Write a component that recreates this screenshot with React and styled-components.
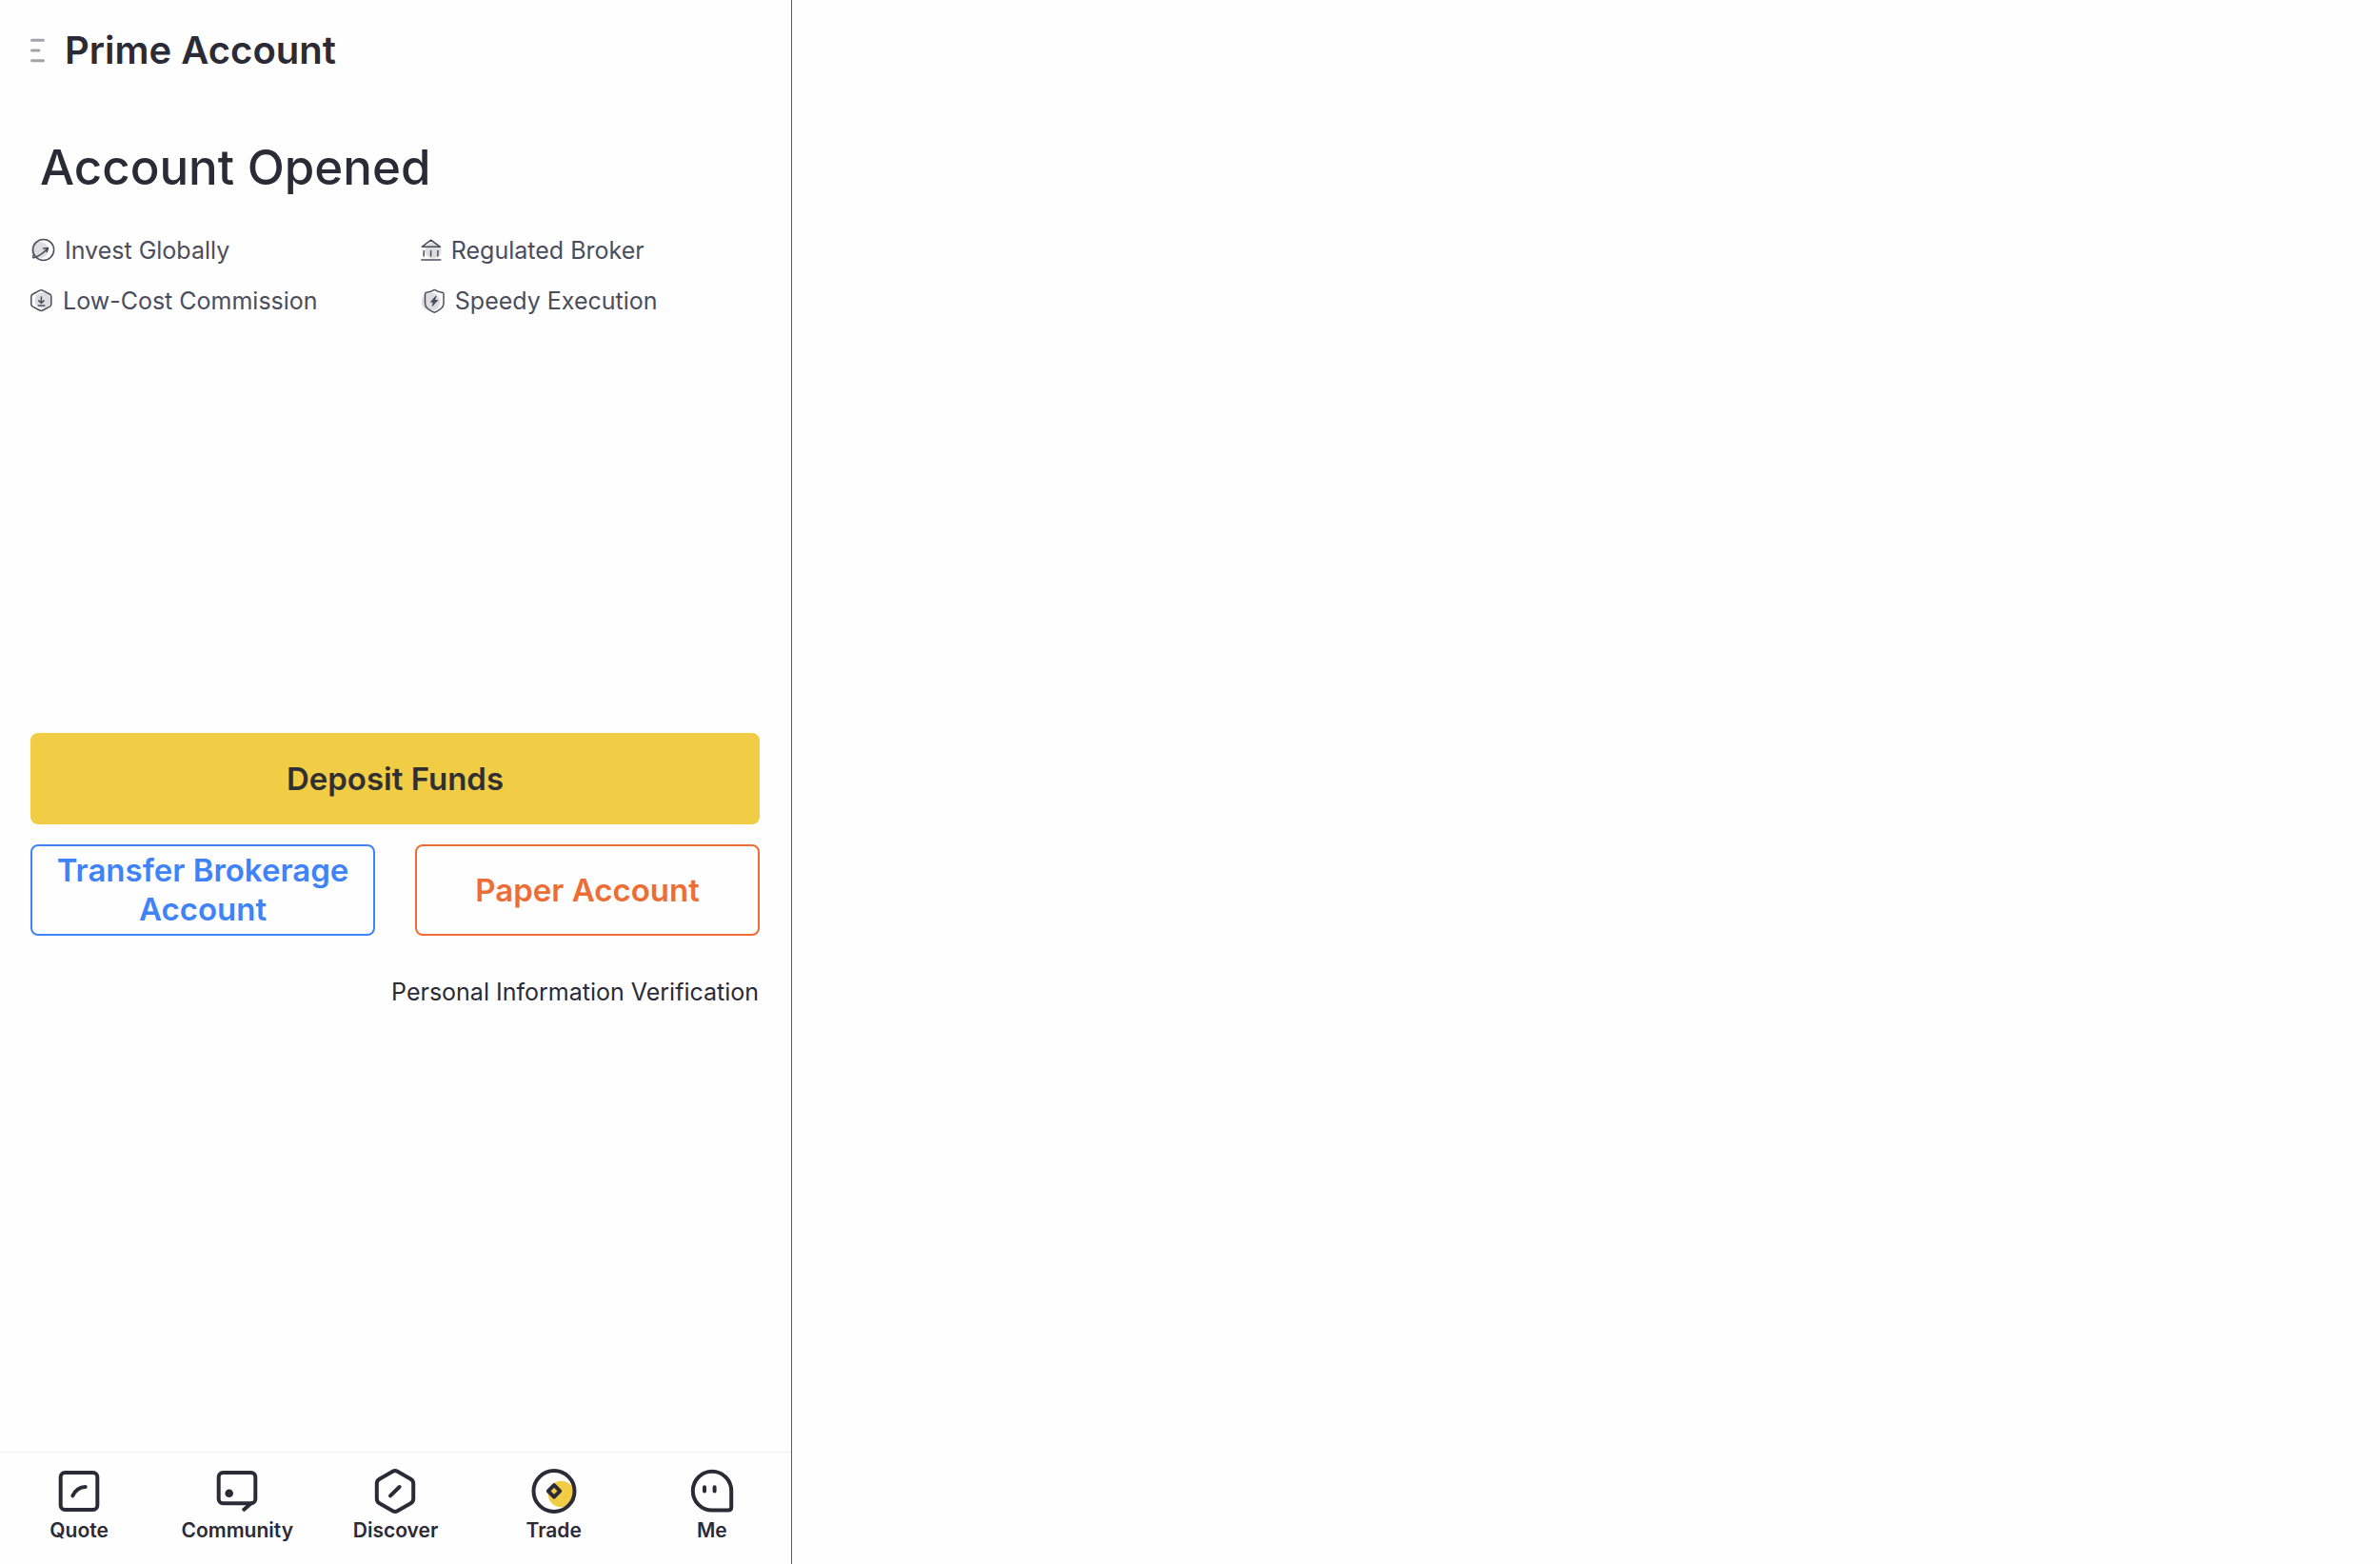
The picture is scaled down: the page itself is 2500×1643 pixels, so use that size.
import React from "react";
import styled, { createGlobalStyle } from "styled-components";

const GlobalStyle = createGlobalStyle`
  * {
    box-sizing: border-box;
  }
  body {
    margin: 0;
    background-color: #fefefe;
    color: #2a2b37;
    font-family: Inter, "Liberation Sans", sans-serif;
  }
`;

const Page = styled.div`
  display: flex;
  min-height: 100vh;
`;

const Panel = styled.div`
  display: flex;
  flex-direction: column;
  width: 33.28%;
  min-width: 360px;
  border-right: 1px solid #5c5c60;
`;

const Detail = styled.main`
  flex: 1;
`;

const Header = styled.header`
  display: flex;
  align-items: center;
  gap: 21px;
  padding: 26px 32px 0;
`;

const MenuButton = styled.button`
  display: flex;
  padding: 0;
  border: none;
  background: none;
  cursor: pointer;
`;

const HeaderTitle = styled.div`
  font-size: 40px;
  font-weight: 600;
  line-height: 54px;
`;

const Content = styled.section`
  flex: 1;
  padding: 64px 33px 32px 32px;
`;

const Title = styled.h1`
  margin: 0;
  padding-left: 10px;
  font-size: 51px;
  font-weight: 500;
  line-height: 64px;
`;

const Features = styled.ul`
  display: grid;
  grid-template-columns: 53.5% 1fr;
  row-gap: 21px;
  margin: 39px 0 0;
  padding: 0;
  list-style: none;
`;

const Feature = styled.li`
  display: flex;
  align-items: center;
  gap: 10px;
  color: #4c4d5c;
  font-size: 25px;
  line-height: 32px;
  white-space: nowrap;
`;

const Actions = styled.div`
  display: grid;
  grid-template-columns: 1fr 1fr;
  gap: 21px 42px;
  margin-top: 438px;
`;

const Button = styled.button`
  min-height: 96px;
  padding: 5px 16px;
  border: 2px solid ${(props) => props.$color};
  border-radius: 8px;
  background-color: transparent;
  color: ${(props) => props.$color};
  font-family: inherit;
  font-size: 33px;
  font-weight: 600;
  line-height: 41px;
  cursor: pointer;
`;

const PrimaryButton = styled(Button)`
  grid-column: 1 / -1;
  background-color: #f0cd45;
  border-color: #f0cd45;
`;

const VerifyRow = styled.div`
  display: flex;
  justify-content: flex-end;
  margin-top: 43px;
`;

const VerifyLink = styled.a`
  padding-right: 1px;
  color: #2a2b37;
  font-size: 25px;
  line-height: 32px;
  text-decoration: none;
`;

const TabBar = styled.nav`
  display: grid;
  grid-template-columns: repeat(5, 1fr);
  padding: 16px 0 23px;
  border-top: 1px solid #f1f1f3;
`;

const Tab = styled.a`
  display: flex;
  flex-direction: column;
  align-items: center;
  gap: 6px;
  color: #2a2b37;
  font-size: 21px;
  font-weight: 600;
  line-height: 24px;
  text-decoration: none;
`;

const TabSvg = styled.svg`
  width: 48px;
  height: 48px;
  fill: none;
  stroke: #2a2b37;
  stroke-width: 4;
  stroke-linecap: round;
  stroke-linejoin: round;
`;

const FeatureSvg = styled.svg`
  flex: none;
  overflow: visible;
  fill: none;
  stroke: #4c4d5c;
  stroke-width: 1.5;
  stroke-linecap: round;
  stroke-linejoin: round;
`;

const MenuIcon = () => (
  <svg width="15" height="26" fill="none" stroke="#a3a3ab" strokeWidth="3" strokeLinecap="round">
    <path d="M1.5 2.3H13.5M1.5 13H9M1.5 23.7H13.5" />
  </svg>
);

const GlobeIcon = () => (
  <FeatureSvg width="26" height="26">
    <circle cx="9.5" cy="12.5" r="9" fill="#dcdce1" stroke="none" />
    <circle cx="13.6" cy="12.4" r="11" />
    <path d="M3.6 17.5C1.9 20 2.2 21.3 4.4 20.6C9.5 19 14.6 15 18.4 10.6M13.6 11L18.6 10.4L17.2 14.8" />
  </FeatureSvg>
);

const BankIcon = () => (
  <FeatureSvg width="22" height="26">
    <circle cx="13" cy="13.3" r="8.5" fill="#dcdce1" stroke="none" />
    <path d="M1.2 9.3L10.7 2.2L20.4 9.3Z" />
    <path d="M3.2 13.5V19M10.6 13.5V19M17.9 13.5V19M.8 23H20.8" />
  </FeatureSvg>
);

const HexagonIcon = () => (
  <FeatureSvg width="24" height="26">
    <circle cx="13" cy="12.5" r="8.5" fill="#dcdce1" stroke="none" />
    <path d="M9.7 2.2Q11.3 1.4 12.9 2.2L20.2 6Q21.8 6.9 21.8 8.6V16.6Q21.8 18.3 20.2 19.2L12.9 23Q11.3 23.8 9.7 23L2.4 19.2Q.8 18.3 .8 16.6V8.6Q.8 6.9 2.4 6Z" />
    <path d="M11.4 9V15.4M8.7 12.9L11.4 15.5L14.1 12.9M8.2 18H14.8" />
  </FeatureSvg>
);

const ShieldIcon = () => (
  <FeatureSvg width="26" height="26">
    <circle cx="10.5" cy="14" r="9.8" fill="#dcdce1" stroke="none" />
    <path d="M14.3 1.4Q18.6 4 22.5 4.3Q24 4.5 24 6V15.5Q24 18.6 21.7 20.7Q18.3 23.8 14.3 25.2Q10.2 23.8 6.8 20.7Q4.5 18.6 4.5 15.5V6Q4.5 4.5 6 4.3Q10 4 14.3 1.4Z" />
    <path d="M15.8 8.2L10.6 14.2H13.4L12.2 18.4L17.7 12.5H14.9Z" fill="#4c4d5c" strokeWidth="1" />
  </FeatureSvg>
);

const QuoteIcon = () => (
  <TabSvg>
    <rect x="4.7" y="5" width="38.6" height="39" rx="4.5" />
    <path d="M17.3 29.3C20.3 23.3 24.3 20.2 30.7 20" />
  </TabSvg>
);

const CommunityIcon = () => (
  <TabSvg>
    <rect x="4.7" y="5" width="38.6" height="32.2" rx="4.5" />
    <path d="M38.5 37.5L31.3 43.8" />
    <circle cx="15.7" cy="26.7" r="4.3" fill="#2a2b37" stroke="none" />
  </TabSvg>
);

const DiscoverIcon = () => (
  <TabSvg>
    <path d="M21.5 3.8Q24 2.4 26.5 3.8L40.4 11.8Q43.2 13.5 43.2 16.6V32.4Q43.2 35.5 40.4 37.2L26.5 45.2Q24 46.6 21.5 45.2L7.6 37.2Q4.8 35.5 4.8 32.4V16.6Q4.8 13.5 7.6 11.8Z" />
    <path d="M19 29.4L28.6 20" />
  </TabSvg>
);

const TradeIcon = () => (
  <TabSvg>
    <circle cx="31.5" cy="27.5" r="13.8" fill="#f0cd45" stroke="none" />
    <circle cx="24" cy="24.5" r="21.5" />
    <path d="M24 18.2L30.2 24.4L24 30.6L17.8 24.4Z" />
  </TabSvg>
);

const MeIcon = () => (
  <TabSvg>
    <path d="M24 3.8A20.2 20.4 0 0 1 44.2 24.2V41.2Q44.2 44.6 40.8 44.6H24A20.2 20.4 0 0 1 24 3.8Z" />
    <path d="M16 20.2V24.4M26.6 20.2V24.4" />
  </TabSvg>
);

const features = [
  { label: "Invest Globally", Icon: GlobeIcon },
  { label: "Regulated Broker", Icon: BankIcon },
  { label: "Low-Cost Commission", Icon: HexagonIcon },
  { label: "Speedy Execution", Icon: ShieldIcon },
];

const tabs = [
  { label: "Quote", Icon: QuoteIcon },
  { label: "Community", Icon: CommunityIcon },
  { label: "Discover", Icon: DiscoverIcon },
  { label: "Trade", Icon: TradeIcon },
  { label: "Me", Icon: MeIcon },
];

function App() {
  return (
    <Page>
      <GlobalStyle />
      <Panel>
        <Header>
          <MenuButton aria-label="Menu">
            <MenuIcon />
          </MenuButton>
          <HeaderTitle>Prime Account</HeaderTitle>
        </Header>
        <Content>
          <Title>Account Opened</Title>
          <Features>
            {features.map(({ label, Icon }) => (
              <Feature key={label}>
                <Icon />
                {label}
              </Feature>
            ))}
          </Features>
          <Actions>
            <PrimaryButton $color="#303033">Deposit Funds</PrimaryButton>
            <Button $color="#3f83f8">Transfer Brokerage Account</Button>
            <Button $color="#ee6d35">Paper Account</Button>
          </Actions>
          <VerifyRow>
            <VerifyLink href="#verification">
              Personal Information Verification
            </VerifyLink>
          </VerifyRow>
        </Content>
        <TabBar>
          {tabs.map(({ label, Icon }) => (
            <Tab key={label} href={`#${label.toLowerCase()}`}>
              <Icon />
              {label}
            </Tab>
          ))}
        </TabBar>
      </Panel>
      <Detail />
    </Page>
  );
}

export default App;
